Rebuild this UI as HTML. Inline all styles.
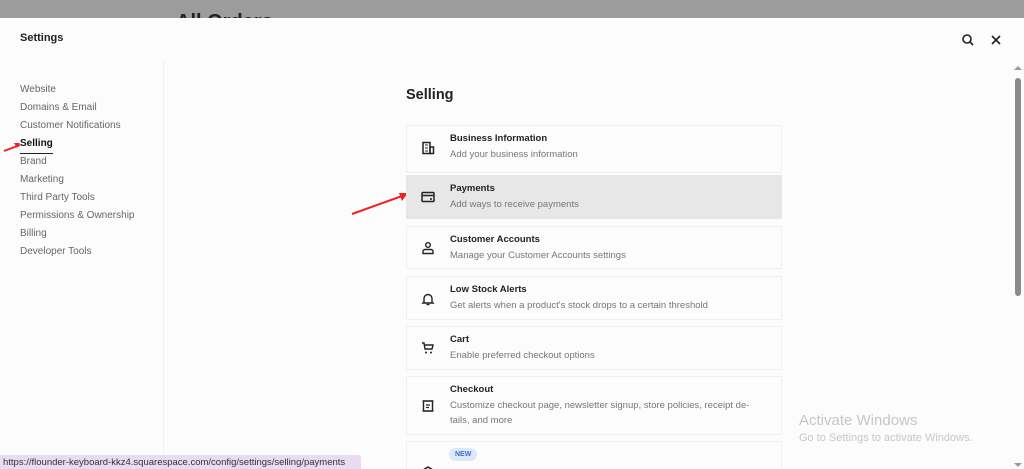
<!DOCTYPE html>
<html><head><style>
*{margin:0;padding:0;box-sizing:border-box}
html,body{width:1024px;height:469px;overflow:hidden}
body{background:#fcfcfc;font-family:"Liberation Sans",sans-serif;position:relative}
.top{position:absolute;left:0;top:0;width:1024px;height:18px;background:#9c9c9c;overflow:hidden}
.top span{position:absolute;left:176px;top:12px;font-size:20px;font-weight:bold;color:#222;line-height:20px}
.hd{position:absolute;left:20px;top:32px;font-size:11px;font-weight:bold;color:#222}
.side{position:absolute;left:163px;top:60px;width:1px;height:409px;background:#f0f0f0}
.nav{position:absolute;left:20px;top:84px;font-size:10px;color:#666}
.nav div{height:18px;line-height:12px}
.nav .a{color:#111;font-weight:bold}
.nav .a span{display:inline-block;border-bottom:1.5px solid #222;padding-bottom:3px}
h1{position:absolute;left:406px;top:87px;font-size:14.5px;font-weight:bold;color:#222}
.card{position:absolute;left:406px;width:376px;border:1px solid #f0f0f0;background:#fcfcfc}
.card.g{background:#e7e7e7;border-color:#e7e7e7}
.card b{position:absolute;left:43px;top:7px;font-size:9.5px;color:#222}
.card p{position:absolute;left:43px;top:21px;font-size:9.5px;color:#777;line-height:15px;width:300px}
.card svg{position:absolute;left:14px}
.scroll{position:absolute;left:1015px;top:78px;width:6px;height:218px;background:#8a8a8a;border-radius:3px}
.aw{position:absolute;left:799px;top:412px;font-size:15px;color:#c6c6c6}
.aw2{position:absolute;left:799px;top:432px;font-size:11px;color:#c6c6c6}
.url{position:absolute;left:0;top:455px;height:14px;width:361px;background:#e7dcf2;font-size:9.5px;color:#333;padding-left:3px;line-height:15px;white-space:nowrap;overflow:hidden;border-radius:0 3px 0 0}
</style></head><body>
<div class="top"><span>All Orders</span></div>
<div class="hd">Settings</div>
<svg style="position:absolute;left:961px;top:33px" width="14" height="14" viewBox="0 0 14 14"><circle cx="6" cy="6" r="4" fill="none" stroke="#222" stroke-width="1.6"/><path d="M9 9l3 3" stroke="#222" stroke-width="1.6"/></svg>
<svg style="position:absolute;left:990px;top:34px" width="12" height="12" viewBox="0 0 12 12"><path d="M2 2l8 8M10 2l-8 8" stroke="#222" stroke-width="1.6"/></svg>
<div class="side"></div>
<div class="nav">
<div>Website</div><div>Domains &amp; Email</div><div>Customer Notifications</div><div class="a"><span>Selling</span></div><div>Brand</div><div>Marketing</div><div>Third Party Tools</div><div>Permissions &amp; Ownership</div><div>Billing</div><div>Developer Tools</div>
</div>
<svg style="position:absolute;left:0;top:140px" width="22" height="14"><path d="M4 11L20 5" stroke="#e22" stroke-width="2"/><path d="M20 3l-6 0 3 5z" fill="#e22"/></svg>
<svg style="position:absolute;left:350px;top:190px" width="60" height="26"><path d="M2 24L52 6" stroke="#e22" stroke-width="2"/><path d="M58 3l-9 0 3 8z" fill="#e22"/></svg>
<h1>Selling</h1>
<div class="card" style="top:125px;height:48px"><svg style="top:15px" width="14" height="14" viewBox="0 0 14 14"><rect x="2" y="1.5" width="7" height="11" fill="none" stroke="#222" stroke-width="1.5"/><rect x="9" y="6" width="3.5" height="6.5" fill="none" stroke="#222" stroke-width="1.5"/><path d="M4 4h3M4 7h3M4 10h3" stroke="#222"/></svg><b>Business Information</b><p>Add your business information</p></div>
<div class="card g" style="top:175px;height:44px"><svg style="top:14px" width="14" height="14" viewBox="0 0 14 14"><rect x="1" y="2.5" width="12" height="9" rx="1" fill="none" stroke="#222" stroke-width="1.5"/><path d="M1 5.5h12M9 9h2" stroke="#222" stroke-width="1.5"/></svg><b>Payments</b><p>Add ways to receive payments</p></div>
<div class="card" style="top:226px;height:43px"><svg style="top:14px" width="14" height="14" viewBox="0 0 14 14"><circle cx="7" cy="4" r="2.3" fill="none" stroke="#222" stroke-width="1.4"/><path d="M2 12.5v-2a2 2 0 012-2h6a2 2 0 012 2v2z" fill="none" stroke="#222" stroke-width="1.4"/></svg><b>Customer Accounts</b><p>Manage your Customer Accounts settings</p></div>
<div class="card" style="top:276px;height:44px"><svg style="top:15px" width="14" height="14" viewBox="0 0 14 14"><path d="M3 10V6.5a4 4 0 018 0V10l1 1H2z" fill="none" stroke="#222" stroke-width="1.4"/><path d="M5.5 12.5h3" stroke="#222" stroke-width="1.4"/></svg><b>Low Stock Alerts</b><p>Get alerts when a product's stock drops to a certain threshold</p></div>
<div class="card" style="top:326px;height:44px"><svg style="top:14px" width="14" height="14" viewBox="0 0 14 14"><path d="M1 2h2l1 6h7l1-4H4" fill="none" stroke="#222" stroke-width="1.4"/><circle cx="5" cy="11.5" r="1" fill="#222"/><circle cx="10" cy="11.5" r="1" fill="#222"/></svg><b>Cart</b><p>Enable preferred checkout options</p></div>
<div class="card" style="top:376px;height:59px"><svg style="top:22px" width="14" height="14" viewBox="0 0 14 14"><rect x="2.5" y="2" width="9" height="10" fill="none" stroke="#222" stroke-width="1.4"/><path d="M1.5 2h11M1.5 12h11M5 6h4M5 8.5h3" stroke="#222" stroke-width="1.3"/></svg><b>Checkout</b><p>Customize checkout page, newsletter signup, store policies, receipt de-tails, and more</p></div>
<div class="card" style="top:441px;height:40px"><span style="position:absolute;left:42px;top:6px;background:#dde8fb;color:#3a6fd8;font-size:7px;font-weight:bold;padding:3px 6px;border-radius:7px">NEW</span><svg style="top:22px" width="14" height="14" viewBox="0 0 14 14"><path d="M2 6l5-3 5 3" fill="none" stroke="#222" stroke-width="1.4"/></svg></div>
<div class="scroll"></div>
<svg style="position:absolute;left:1014px;top:65px" width="8" height="6"><path d="M0 5l4-4 4 4z" fill="#999"/></svg>
<svg style="position:absolute;left:1014px;top:463px" width="8" height="5"><path d="M0 0l4 4 4-4z" fill="#999"/></svg>
<div class="aw">Activate Windows</div>
<div class="aw2">Go to Settings to activate Windows.</div>
<div class="url">https://flounder-keyboard-kkz4.squarespace.com/config/settings/selling/payments</div>
</body></html>
